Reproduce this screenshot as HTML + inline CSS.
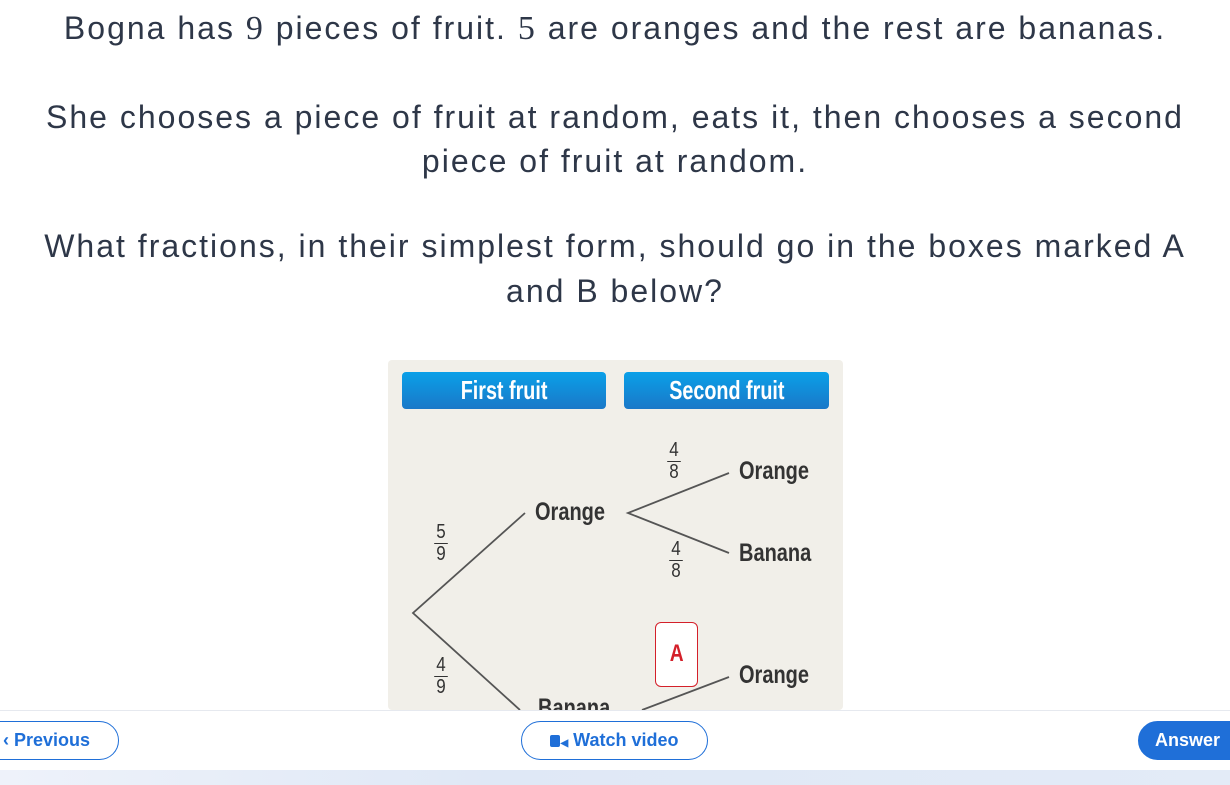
<!DOCTYPE html>
<html><head><style>
body{margin:0;width:1230px;height:785px;overflow:hidden;background:#fff;font-family:"Liberation Sans",sans-serif;color:#2e3748;position:relative}
.t{position:absolute;left:0;width:1230px;text-align:center;font-size:32px;line-height:44px;letter-spacing:2px;white-space:nowrap}
.m{font-family:"Liberation Serif",serif;font-size:34px}
.panel{position:absolute;left:388px;top:360px;width:455px;height:350px;background:#f1efe9;border-radius:4px;overflow:hidden}
.hd{position:absolute;top:12px;height:37px;background:linear-gradient(#0aa0e8,#1a78c8);border-radius:4px;color:#fff;font-weight:bold;font-size:26px;line-height:37px;text-align:center}
.hd span{display:inline-block;transform:scaleX(.76)}
.lb{position:absolute;font-weight:bold;font-size:25px;color:#333;transform:scaleX(.8);transform-origin:0 0}
.fr{position:absolute;font-size:20px;color:#333;text-align:center;width:16px;line-height:21px;transform:scaleX(.85)}
.fr span{display:block;border-top:1.5px solid #333}
.bar{position:absolute;left:0;top:710px;width:1230px;height:60px;background:#fff;border-top:1px solid #e6e9ef}
.btn{position:absolute;top:10px;height:39px;border:1px solid #1f6fd8;border-radius:20px;color:#1f6fd8;font-weight:bold;font-size:18px;line-height:37px;box-sizing:border-box}
.bot{position:absolute;left:0;top:770px;width:1230px;height:15px;background:linear-gradient(90deg,#eef2fa,#dfe8f6 40%,#e3ebf7)}
</style></head><body>
<div class="t" style="top:6px">Bogna has <span class="m">9</span> pieces of fruit. <span class="m">5</span> are oranges and the rest are bananas.</div>
<div class="t" style="top:95px">She chooses a piece of fruit at random, eats it, then chooses a second</div>
<div class="t" style="top:139px">piece of fruit at random.</div>
<div class="t" style="top:224px">What fractions, in their simplest form, should go in the boxes marked A</div>
<div class="t" style="top:269px">and B below?</div>
<div class="panel">
<div class="hd" style="left:14px;width:204px"><span>First fruit</span></div>
<div class="hd" style="left:236px;width:205px"><span>Second fruit</span></div>
<svg width="455" height="350" style="position:absolute;left:0;top:0">
<g stroke="#555" stroke-width="1.8" fill="none">
<path d="M137 153 L25 253 L132 350"/>
<path d="M341 113 L240 153 L341 193"/>
<path d="M341 317 L254 350"/>
</g></svg>
<div class="lb" style="left:147px;top:138px">Orange</div>
<div class="lb" style="left:351px;top:97px">Orange</div>
<div class="lb" style="left:351px;top:179px">Banana</div>
<div class="lb" style="left:351px;top:301px">Orange</div>
<div class="lb" style="left:150px;top:334px">Banana</div>
<div class="fr" style="left:278px;top:80px">4<span>8</span></div>
<div class="fr" style="left:280px;top:179px">4<span>8</span></div>
<div class="fr" style="left:45px;top:162px">5<span>9</span></div>
<div class="fr" style="left:45px;top:295px">4<span>9</span></div>
<div style="position:absolute;left:267px;top:262px;width:43px;height:65px;border:1.5px solid #d4202a;border-radius:6px;background:#fff;box-sizing:border-box;color:#d4202a;font-weight:bold;font-size:24px;text-align:center;line-height:62px"><span style="display:inline-block;transform:scaleX(.8)">A</span></div>
</div>
<div class="bar">
<div class="btn" style="left:-20px;width:139px;padding-left:22px">&#8249; Previous</div>
<div class="btn" style="left:521px;width:187px;text-align:center"><span style="display:inline-block;width:10px;height:12px;background:#1f6fd8;border-radius:2px;vertical-align:-1px"></span><span style="font-size:10px">◀</span> Watch video</div>
<div class="btn" style="left:1138px;width:120px;background:#1f6fd8;color:#fff;padding-left:16px">Answer</div>
</div>
<div class="bot"></div>
</body></html>
